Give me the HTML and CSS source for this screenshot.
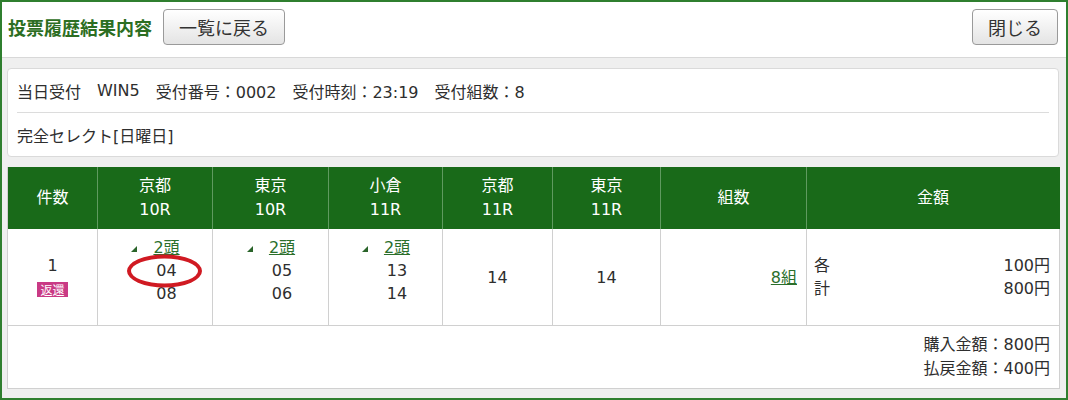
FILE: index.html
```html
<!DOCTYPE html>
<html lang="ja">
<head>
<meta charset="utf-8">
<title>投票履歴結果内容</title>
<link rel="stylesheet" href="styles.css">
</head>
<body>
<div class="frame">
  <header class="topbar">
    <h1 class="title">投票履歴結果内容</h1>
    <button class="btn">一覧に戻る</button>
    <span class="spacer"></span>
    <button class="btn">閉じる</button>
  </header>
  <main class="content">
    <section class="card">
      <div class="card-row info">
        <span>当日受付</span>
        <span>WIN5</span>
        <span>受付番号：0002</span>
        <span>受付時刻：23:19</span>
        <span>受付組数：8</span>
      </div>
      <div class="card-row">完全セレクト[日曜日]</div>
    </section>
    <table class="result">
      <colgroup>
        <col style="width:90px"><col style="width:115px"><col style="width:116px"><col style="width:114px"><col style="width:110px"><col style="width:108px"><col style="width:146px"><col style="width:253px">
      </colgroup>
      <thead>
        <tr>
          <th>件数</th>
          <th>京都<br>10R</th>
          <th>東京<br>10R</th>
          <th>小倉<br>11R</th>
          <th>京都<br>11R</th>
          <th>東京<br>11R</th>
          <th>組数</th>
          <th>金額</th>
        </tr>
      </thead>
      <tbody>
        <tr class="body-row">
          <td class="count">1<br><span class="badge">返還</span></td>
          <td class="horses"><div><span class="tri"></span><a class="link" href="#">2頭</a></div><div><span class="mark">04</span></div><div>08</div></td>
          <td class="horses"><div><span class="tri"></span><a class="link" href="#">2頭</a></div><div>05</div><div>06</div></td>
          <td class="horses"><div><span class="tri"></span><a class="link" href="#">2頭</a></div><div>13</div><div>14</div></td>
          <td class="single">14</td>
          <td class="single">14</td>
          <td class="kumi"><a class="link" href="#">8組</a></td>
          <td class="money">
            <div class="money-line"><span>各</span><span>100円</span></div>
            <div class="money-line"><span>計</span><span>800円</span></div>
          </td>
        </tr>
        <tr class="foot-row">
          <td colspan="8" class="total">購入金額：800円<br>払戻金額：400円</td>
        </tr>
      </tbody>
    </table>
  </main>
</div>
</body>
</html>
```

FILE: styles.css
```css
* { box-sizing: border-box; }
html, body { margin: 0; padding: 0; }
body {
  font-family: "DejaVu Sans", "Noto Sans CJK JP", sans-serif;
  color: #2e2e2e;
  font-size: 16px;
}
.frame {
  width: 1068px;
  height: 400px;
  border: 2px solid #2f7f2f;
  background: #efefef;
  overflow: hidden;
}
.topbar {
  display: flex;
  align-items: flex-start;
  height: 56px;
  padding: 7px 8px 0 6px;
  background: #fff;
  border-bottom: 1px solid #d8d8d8;
}
.title {
  margin: 0 11px 0 0;
  font-family: "Noto Sans CJK JP", sans-serif;
  font-size: 18px;
  line-height: 36px;
  font-weight: bold;
  color: #2c6e22;
}
.spacer { flex: 1; }
.btn {
  height: 36px;
  padding: 0 15px;
  font-family: "DejaVu Sans", "Noto Sans CJK JP", sans-serif;
  font-size: 18px;
  color: #333;
  background: linear-gradient(#ffffff, #e4e4e4);
  border: 1px solid #9a9a9a;
  border-radius: 4px;
}
.content {
  padding: 10px 7px 0 5px;
}
.card {
  background: #fff;
  border: 1px solid #dadada;
  border-radius: 4px;
  padding: 0 9px;
}
.card-row {
  height: 43px;
  display: flex;
  align-items: center;
}
.card-row.info {
  gap: 16px;
  border-bottom: 1px solid #dcdcdc;
  height: 44px;
}
.result {
  margin-top: 10px;
  width: 1052px;
  table-layout: fixed;
  border-spacing: 0;
  border-left: 1px solid #d0d0d0;
  background: #fff;
}
.result th {
  height: 62px;
  padding: 0;
  background: #196a19;
  color: #fff;
  font-weight: normal;
  line-height: 24px;
  border-right: 1px solid #5f9a5f;
}
.result th:last-child { border-right: 1px solid #196a19; }
.result td {
  padding: 0;
  border-right: 1px solid #d0d0d0;
  border-bottom: 1px solid #d0d0d0;
  line-height: 23px;
  text-align: center;
}
.body-row td { height: 97px; }
.foot-row td { height: 63px; }
.count { vertical-align: middle; }
.badge {
  display: inline-block;
  background: #c93a85;
  color: #fff;
  font-family: "Noto Sans CJK JP", sans-serif;
  font-size: 12px;
  line-height: 15px;
  padding: 0 3px;
  vertical-align: middle;
}
.result td.horses {
  vertical-align: top;
  padding: 7px 0 0 23px;
}
.tri {
  display: inline-block;
  width: 0;
  height: 0;
  border-left: 6px solid transparent;
  border-bottom: 6px solid #2a642a;
  margin-left: -22px;
  margin-right: 16px;
  vertical-align: 1px;
}
.link {
  color: #2b6f2b;
  text-decoration: underline;
}
.mark {
  position: relative;
  display: inline-block;
}
.mark::after {
  content: "";
  position: absolute;
  left: 50%;
  top: 50%;
  width: 67px;
  height: 25px;
  transform: translate(-52%, -50%);
  border: 4px solid #d01a22;
  border-radius: 50%;
}
.result td.kumi {
  text-align: right;
  padding-right: 9px;
}
.result td.money {
  padding: 0 9px 0 7px;
  text-align: left;
}
.money-line {
  display: flex;
  justify-content: space-between;
}
.result td.total {
  text-align: right;
  padding-right: 9px;
  line-height: 24px;
}
```
